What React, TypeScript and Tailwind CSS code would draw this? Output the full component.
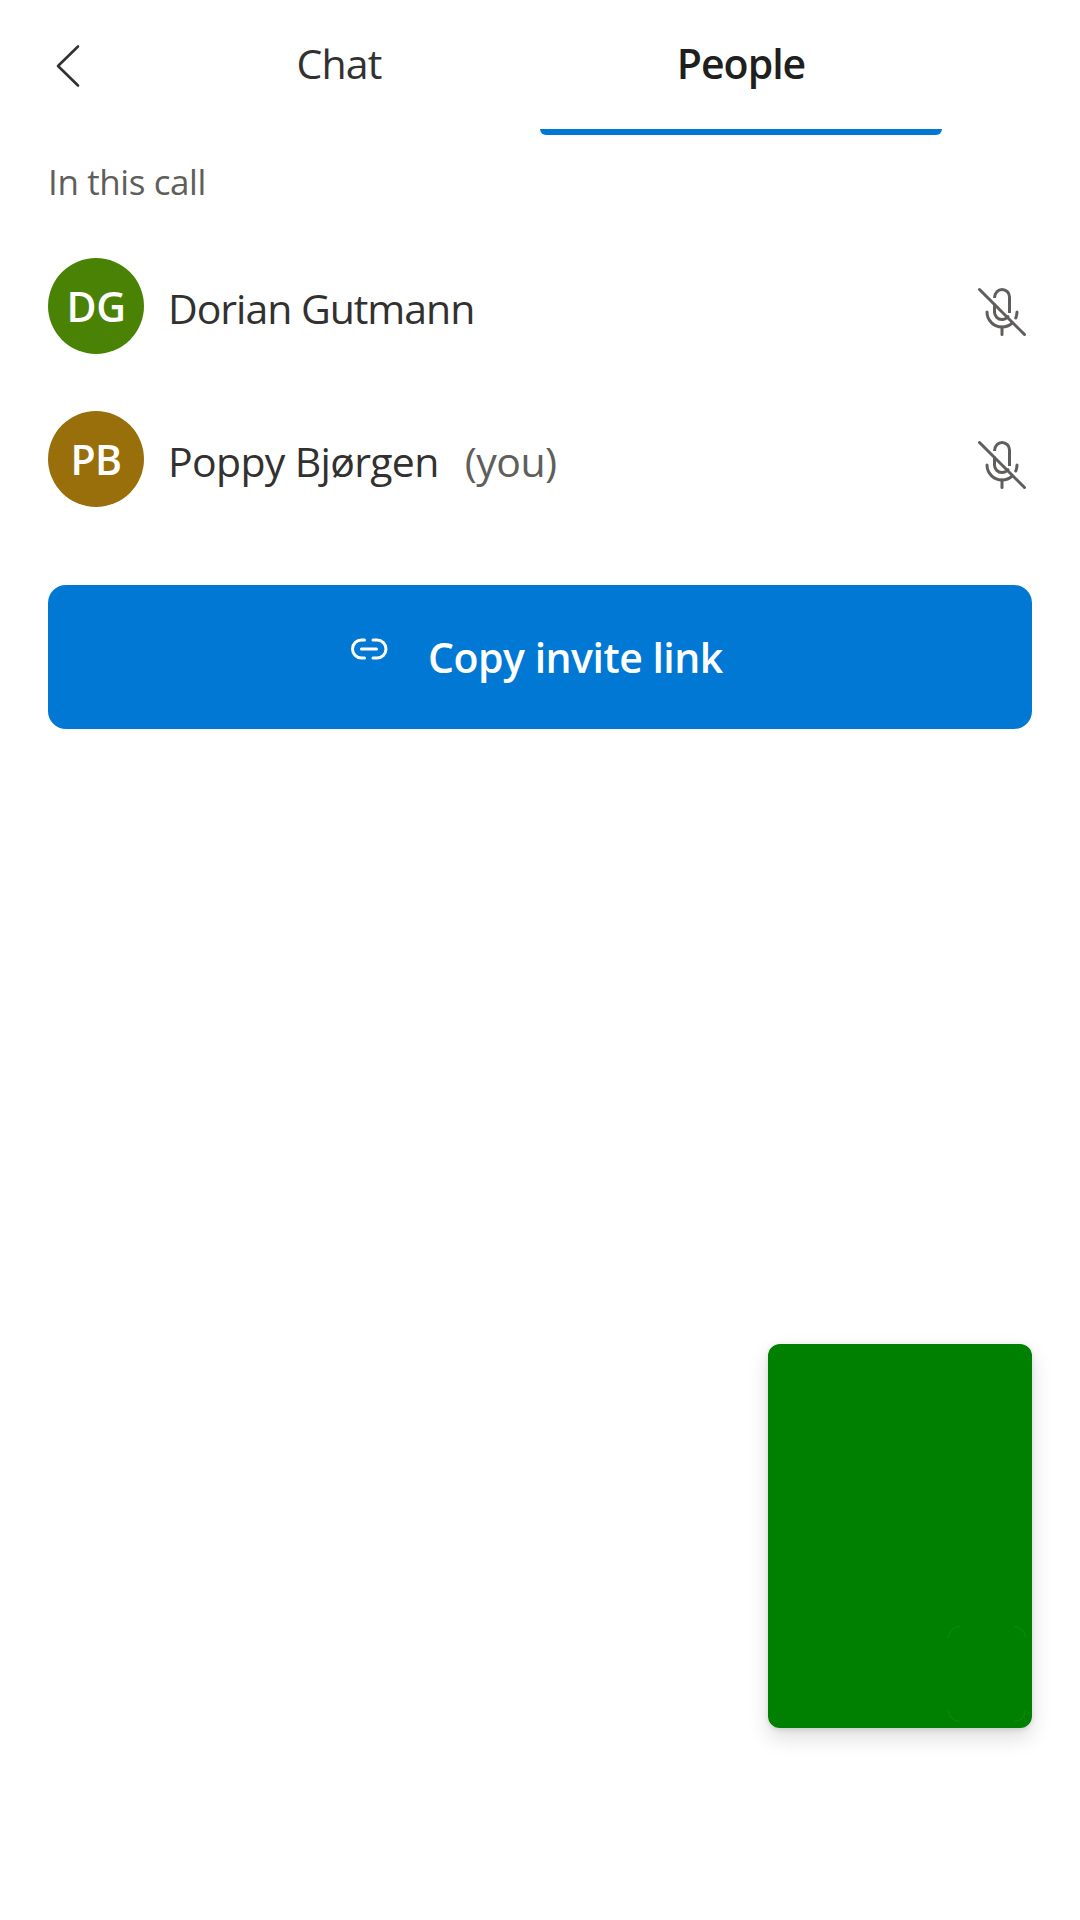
const font = "font-['Segoe_UI','Open_Sans','Noto_Sans',sans-serif]";

function MicOff() {
  return (
    <svg className="h-[60px] w-[60px] shrink-0" viewBox="0 0 60 60" fill="none" stroke="#605e5c" strokeWidth="3" strokeLinecap="round">
      <path d="M7.5 7.5 L52.5 52.5" />
      <path d="M22.5 16 C22.6 10.8 26.2 7.5 30 7.5 C34.2 7.5 37.5 10.8 37.5 15 V31" strokeLinecap="butt" />
      <path d="M22.5 22.5 V30 C22.5 34.2 25.8 37.5 30 37.5 C32.4 37.5 34.6 36.4 36 34.6" />
      <path d="M15 30 C15 38.3 21.7 45 30 45 C34 45 37.6 43.4 40.3 40.8" />
      <path d="M45 30 C45 32.3 44.5 34 43.8 36" />
      <path d="M30 45 V52.5" />
    </svg>
  );
}

type PersonProps = { initials: string; name: string; color: string; nameClass: string; you?: boolean };

function Person({ initials, name, color, nameClass, you }: PersonProps) {
  return (
    <li className="flex h-[153px] items-center">
      <div className={`flex h-24 w-24 shrink-0 items-center justify-center rounded-full text-[41px] leading-[56px] font-semibold text-white ${color}`}>
        <span className="-tracking-[0.5px]">{initials}</span>
      </div>
      <div className="ml-6 flex grow pt-[5px] text-[41px] leading-[56px] whitespace-nowrap">
        <span className={`text-[#323130] ${nameClass}`}>{name}</span>
        {you && <span className="ml-[26px] tracking-[-0.5px] text-[#605e5c]">(you)</span>}
      </div>
      <div className="pt-3">
        <MicOff />
      </div>
    </li>
  );
}

export default function App() {
  return (
    <main className={`relative flex h-[1920px] w-[1080px] flex-col overflow-hidden bg-white ${font}`}>
      <header className="grid h-[135px] grid-cols-[138px_402px_402px_138px]">
        <button className="flex items-start pt-[43px] pl-[54px]" aria-label="Back">
          <svg width="30" height="46" viewBox="0 0 30 46" fill="none" stroke="#323130" strokeWidth="2.6" strokeLinecap="round" strokeLinejoin="round">
            <path d="M24 3.5 L4 23 L24 42.5" />
          </svg>
        </button>
        <button className="flex h-[125px] items-center justify-center text-[41px] leading-[56px] tracking-[-0.9px] text-[#323130]">
          <span>Chat</span>
        </button>
        <button className="flex h-[135px] flex-col text-[41px] leading-[56px] font-semibold text-[#201f1e]">
          <span className="flex h-[129px] w-full items-center justify-center pb-1 tracking-[-1px]">
            <span>People</span>
          </span>
          <span className="h-1.5 w-full rounded-b-md bg-[#0078d4]" />
        </button>
      </header>

      <h2 className="mt-[22px] pl-12 text-[35px] leading-[50px] tracking-[-0.4px] text-[#605e5c]">
        <span>In this call</span>
      </h2>

      <ul className="mt-[22px] px-12">
        <Person initials="DG" name="Dorian Gutmann" color="bg-[#498205]" nameClass="tracking-[-1.03px]" />
        <Person initials="PB" name="Poppy Bjørgen" color="bg-[#986f0b]" nameClass="tracking-[-0.67px]" you />
      </ul>

      <button className="mx-12 mt-[50px] flex h-36 shrink-0 items-center rounded-[18px] bg-[#0078d4] pl-[300px] text-[41px] leading-[56px] font-semibold whitespace-nowrap text-white">
        <svg className="-mt-4 shrink-0" width="40" height="26" viewBox="0 0 40 26" fill="none" stroke="#fff" strokeWidth="3" strokeLinecap="round">
          <path d="M16.5 4 H13.5 A9 9 0 0 0 13.5 22 H16.5" />
          <path d="M25 4 H29 A9 9 0 0 1 29 22 H25" />
          <path d="M13.5 13 H28.5" />
        </svg>
        <span className="ml-10 tracking-[-0.5px]">Copy invite link</span>
      </button>

      <div className="mt-auto mr-12 mb-48 flex h-96 w-[264px] shrink-0 items-end justify-end self-end rounded-xl bg-[#008000] p-1.5 shadow-[0_9.6px_21.6px_rgba(0,0,0,0.132),0_1.8px_5.4px_rgba(0,0,0,0.108)]">
        <svg className="h-24 w-[78px]" viewBox="0 0 78 96" fill="none" stroke="#188c18" strokeWidth="0.8">
          <path d="M0.5 12 A11.5 11.5 0 0 1 12 0.5 M66 0.5 A11.5 11.5 0 0 1 77.5 12 M77.5 84 A11.5 11.5 0 0 1 66 95.5 M12 95.5 A11.5 11.5 0 0 1 0.5 84" />
        </svg>
      </div>
    </main>
  );
}
